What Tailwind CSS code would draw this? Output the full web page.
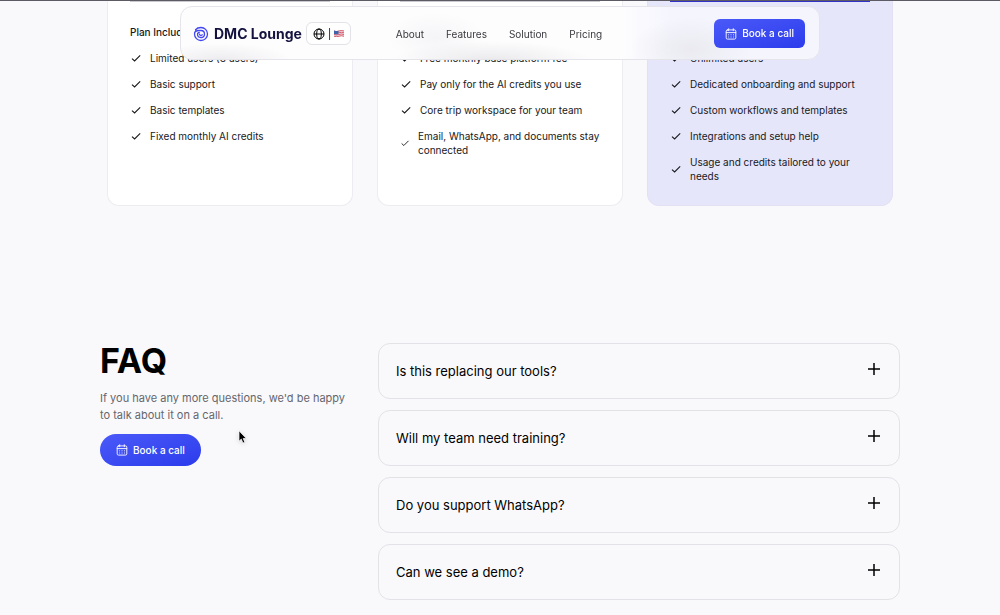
<!DOCTYPE html>
<html lang="en">
<head>
<meta charset="utf-8">
<meta name="viewport" content="width=device-width, initial-scale=1">
<title>DMC Lounge</title>
<script src="https://cdn.jsdelivr.net/npm/@tailwindcss/browser@4"></script>
</head>
<body class="bg-[#f9f9fc] font-['Inter',sans-serif] text-[#18181b] overflow-x-hidden">
<svg class="hidden" aria-hidden="true">
  <symbol id="check" viewBox="0 0 12 12"><path d="M2 6.6 4.6 9 10.2 3.4" fill="none" stroke="currentColor" stroke-width="1.1"/></symbol>
  <symbol id="plus" viewBox="0 0 14 14"><path d="M7 1v12M1 7h12" fill="none" stroke="currentColor" stroke-width="1.5"/></symbol>
  <symbol id="calendar" viewBox="0 0 12 12"><g fill="none" stroke="currentColor" stroke-width=".9" stroke-linecap="round" stroke-linejoin="round"><rect x="1.2" y="1.9" width="9.6" height="9.2" rx="1.3"/><path d="M3.7.7v2M8.3.7v2M1.2 4.6h9.6"/><path d="M3.6 6.8h.1M6 6.8h.1M8.4 6.8h.1M3.6 9h.1M6 9h.1M8.4 9h.1"/></g></symbol>
</svg>

<header class="fixed inset-x-0 top-[6px] z-10 px-4">
  <nav class="mx-auto grid max-w-[640px] grid-cols-[1fr_auto_1fr] items-center rounded-xl border border-[#e4e4ea] bg-[#fdfdfe] bg-[radial-gradient(70px_16px_at_40px_52px,#ededef,transparent),radial-gradient(100px_20px_at_310px_54px,#e9e9eb,transparent),radial-gradient(50px_24px_at_255px_30px,#f5f5f7,transparent),radial-gradient(60px_32px_at_510px_42px,#eaeaf0,transparent),linear-gradient(90deg,transparent_440px,#f5f5fe_490px)] pt-3 pr-[14px] pb-[11px] pl-3">
    <div class="flex items-center gap-1">
      <a href="#" class="flex items-center gap-[5px] text-[14px] leading-5 font-bold text-[#14123f]">
        <svg class="size-4 text-[#4247f0]" viewBox="0 0 32 32" fill="none" stroke="currentColor" stroke-width="2.6" stroke-linecap="round" aria-hidden="true"><path d="M5 7.500C8 4 11.500 3 16 3a13 13 0 1 1-13 13c0-4.500 4-7 9-7h4a7 7 0 1 1-7 7.500c0-2 1.500-3.500 3.500-3.500"/><path d="M13 16.500a3 3 0 0 0 5.500 1"/></svg>
        DMC Lounge
      </a>
      <button type="button" aria-label="Language: English (US)" class="flex h-[23px] items-center gap-[3px] rounded-md border border-[#e2e2e8] bg-white/70 px-[6px] text-[10px] leading-3 text-black">
        <svg class="size-3" viewBox="0 0 12 12" fill="none" stroke="currentColor" stroke-width="1" aria-hidden="true"><circle cx="6" cy="6" r="5"/><ellipse cx="6" cy="6" rx="2.300" ry="5"/><path d="M1 6h10"/></svg>
        <span>|</span>
        <svg class="h-[7px] w-[10px]" viewBox="0 0 20 14" aria-hidden="true"><path fill="#f3dfe3" d="M0 1q5 2 10 0t10 0v12q-5-2-10 0t-10 0z"/><path fill="none" stroke="#d0465a" stroke-width="1.700" d="M0 2q5 2 10 0t10 0M0 5.500q5 2 10 0t10 0M0 9q5 2 10 0t10 0M0 12.500q5 2 10 0t10 0"/><path fill="#3e63a8" d="M0 1q5 2 9 .3V8q-4 1.500-9 0z"/></svg>
      </button>
    </div>
    <div class="flex items-center gap-[22px] text-[10px] leading-4 text-[#3a3a3f]">
      <a href="#about">About</a>
      <a href="#features">Features</a>
      <a href="#solution">Solution</a>
      <a href="#pricing">Pricing</a>
    </div>
    <button type="button" class="flex h-[29px] items-center gap-[5px] justify-self-end rounded-md bg-linear-to-br from-[#4b59f8] to-[#2c3bec] px-[11px] text-[10px] font-medium text-white"><svg class="size-3" aria-hidden="true"><use href="#calendar"/></svg>Book a call</button>
  </nav>
</header>

<main>
  <div class="h-px bg-[#5c5a62]"></div>
  <section id="pricing" class="mx-auto grid max-w-[786px] grid-cols-3 gap-6 text-[10px] leading-[14px]">
    <article class="rounded-b-xl border border-t-0 border-[#ececf1] bg-white px-[22px]">
      <div class="h-px bg-[#c9c9cf]"></div>
      <h3 class="mt-[23px] font-medium">Plan Includes:</h3>
      <ul class="mt-3 flex flex-col gap-3">
        <li class="flex items-center gap-2"><svg class="size-3" aria-hidden="true"><use href="#check"/></svg>Limited users (3 users)</li>
        <li class="flex items-center gap-2"><svg class="size-3" aria-hidden="true"><use href="#check"/></svg>Basic support</li>
        <li class="flex items-center gap-2"><svg class="size-3" aria-hidden="true"><use href="#check"/></svg>Basic templates</li>
        <li class="flex items-center gap-2"><svg class="size-3" aria-hidden="true"><use href="#check"/></svg>Fixed monthly AI credits</li>
      </ul>
    </article>
    <article class="rounded-b-xl border border-t-0 border-[#ececf1] bg-white px-[22px]">
      <div class="h-px bg-[#c9c9cf]"></div>
      <ul class="mt-[49px] -mr-2 flex flex-col gap-3">
        <li class="flex items-center gap-2"><svg class="size-3" aria-hidden="true"><use href="#check"/></svg>Free monthly base platform fee</li>
        <li class="flex items-center gap-2"><svg class="size-3" aria-hidden="true"><use href="#check"/></svg>Pay only for the AI credits you use</li>
        <li class="flex items-center gap-2"><svg class="size-3" aria-hidden="true"><use href="#check"/></svg>Core trip workspace for your team</li>
        <li class="flex items-center gap-2"><svg class="size-[10px] shrink-0" aria-hidden="true"><use href="#check"/></svg>Email, WhatsApp, and documents stay connected</li>
      </ul>
    </article>
    <article class="rounded-b-xl border border-t-0 border-[#e2e0f2] bg-[#e6e6fb] px-[22px] pb-[22px]">
      <div class="h-px bg-[#3232c8]"></div>
      <ul class="mt-[49px] flex flex-col gap-3">
        <li class="flex items-center gap-2"><svg class="size-3" aria-hidden="true"><use href="#check"/></svg>Unlimited users</li>
        <li class="flex items-center gap-2"><svg class="size-3" aria-hidden="true"><use href="#check"/></svg>Dedicated onboarding and support</li>
        <li class="flex items-center gap-2"><svg class="size-3" aria-hidden="true"><use href="#check"/></svg>Custom workflows and templates</li>
        <li class="flex items-center gap-2"><svg class="size-3" aria-hidden="true"><use href="#check"/></svg>Integrations and setup help</li>
        <li class="flex items-center gap-2"><svg class="size-3 shrink-0" aria-hidden="true"><use href="#check"/></svg>Usage and credits tailored to your needs</li>
      </ul>
    </article>
  </section>

  <section class="mx-auto mt-[137px] grid max-w-[800px] grid-cols-[256px_1fr] gap-[22px] pb-[14px]">
    <div>
      <h2 class="text-[34px] leading-9 font-bold text-black">FAQ</h2>
      <p class="mt-[11px] text-[11px] leading-[17px] text-[#66666b]">If you have any more questions, we'd be happy to talk about it on a call.</p>
      <button type="button" class="mt-[10px] flex h-8 items-center gap-[5px] rounded-full bg-linear-to-br from-[#4b59f8] to-[#2c3bec] px-4 text-[10px] font-medium text-white"><svg class="size-3" aria-hidden="true"><use href="#calendar"/></svg>Book a call</button>
    </div>
    <div class="flex flex-col gap-[11px] text-[13px] leading-5 text-black">
      <button type="button" class="flex h-14 items-center justify-between rounded-xl border border-[#e3e3e7] pr-[18px] pl-[17px] text-left">Is this replacing our tools?<svg class="mb-1 size-[14px]" aria-hidden="true"><use href="#plus"/></svg></button>
      <button type="button" class="flex h-14 items-center justify-between rounded-xl border border-[#e3e3e7] pr-[18px] pl-[17px] text-left">Will my team need training?<svg class="mb-1 size-[14px]" aria-hidden="true"><use href="#plus"/></svg></button>
      <button type="button" class="flex h-14 items-center justify-between rounded-xl border border-[#e3e3e7] pr-[18px] pl-[17px] text-left">Do you support WhatsApp?<svg class="mb-1 size-[14px]" aria-hidden="true"><use href="#plus"/></svg></button>
      <button type="button" class="flex h-14 items-center justify-between rounded-xl border border-[#e3e3e7] pr-[18px] pl-[17px] text-left">Can we see a demo?<svg class="mb-1 size-[14px]" aria-hidden="true"><use href="#plus"/></svg></button>
    </div>
  </section>
</main>

<svg class="absolute top-[430px] left-[238px] h-[14px] w-[9px] drop-shadow-sm" viewBox="0 0 9 14" aria-hidden="true"><path d="M1 .8v10.400l2.300-2.100 1.600 3.900 1.900-.8-1.600-3.700h3.100z" fill="#000" stroke="#fff" stroke-width=".7"/></svg>
</body>
</html>
